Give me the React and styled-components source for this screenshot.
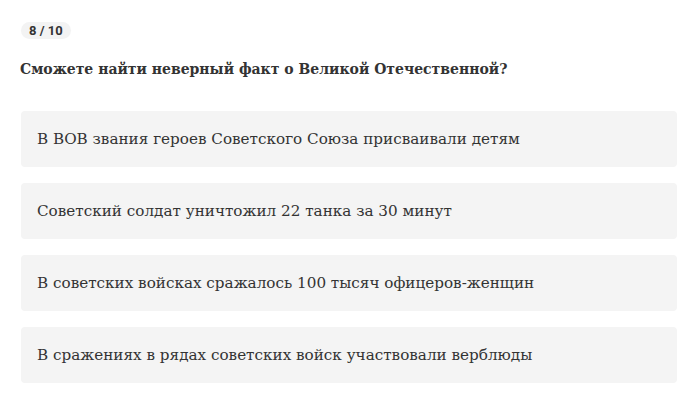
import React from "react";
import styled, { createGlobalStyle } from "styled-components";

const GlobalStyle = createGlobalStyle`
  body {
    margin: 0;
    background: #ffffff;
  }
`;

const options = [
  "В ВОВ звания героев Советского Союза присваивали детям",
  "Советский солдат уничтожил 22 танка за 30 минут",
  "В советских войсках сражалось 100 тысяч офицеров-женщин",
  "В сражениях в рядах советских войск участвовали верблюды",
];

const App = () => {
  return (
    <>
      <GlobalStyle />
      <Wrapper>
        <Counter>8 / 10</Counter>
        <Question>Сможете найти неверный факт о Великой Отечественной?</Question>
        <Options>
          {options.map((text) => (
            <Option key={text}>{text}</Option>
          ))}
        </Options>
      </Wrapper>
    </>
  );
};

const Wrapper = styled.div`
  width: 656px;
  padding: 21px 0 0 21px;
  color: #333333;
`;

const Counter = styled.span`
  display: inline-flex;
  align-items: center;
  height: 17px;
  padding: 0 8px;
  border-radius: 9px;
  background: #f3f3f3;
  font-family: Roboto, "Noto Sans", sans-serif;
  font-weight: 700;
  font-size: 13px;
  color: #333333;
`;

const Question = styled.h2`
  margin: 19px 0 0 -1px;
  font-family: "DejaVu Serif", serif;
  font-weight: 700;
  font-size: 14px;
  line-height: 22px;
  color: #333333;
`;

const Options = styled.div`
  display: flex;
  flex-direction: column;
  gap: 16px;
  margin-top: 31px;
`;

const Option = styled.div`
  display: flex;
  align-items: center;
  height: 56px;
  padding: 0 16px;
  border-radius: 4px;
  background: #f4f4f4;
  font-family: "DejaVu Serif", serif;
  font-size: 15.2px;
  color: #333333;
  cursor: pointer;
`;

export default App;
